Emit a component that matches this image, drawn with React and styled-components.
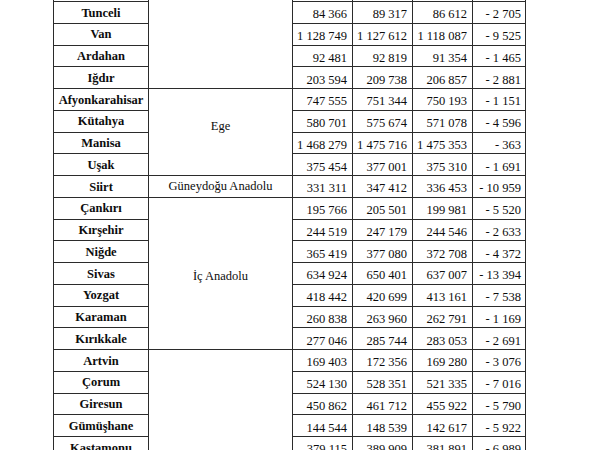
import React from 'react';
import styled, { createGlobalStyle } from 'styled-components';

const ROW_H = 21.75;
const ROWS_ABOVE = 6;

const columns = [95, 144, 60, 60, 60, 53];

const groups = [
  {
    region: 'Doğu Anadolu',
    rows: [
      ['Erzincan', '210 645', '213 538', '210 340', '- 3 198'],
      ['Erzurum', '784 941', '774 967', '769 085', '- 5 882'],
      ['Hakkari', '236 581', '246 469', '256 761', '10 292'],
      ['Kars', '312 128', '312 205', '306 536', '- 5 669'],
      ['Malatya', '722 065', '733 789', '736 884', '3 095'],
      ['Muş', '404 309', '403 236', '406 886', '3 650'],
      ['Tunceli', '84 366', '89 317', '86 612', '- 2 705'],
      ['Van', '1 128 749', '1 127 612', '1 118 087', '- 9 525'],
      ['Ardahan', '92 481', '92 819', '91 354', '- 1 465'],
      ['Iğdır', '203 594', '209 738', '206 857', '- 2 881'],
    ],
  },
  {
    region: 'Ege',
    shift: -11,
    rows: [
      ['Afyonkarahisar', '747 555', '751 344', '750 193', '- 1 151'],
      ['Kütahya', '580 701', '575 674', '571 078', '- 4 596'],
      ['Manisa', '1 468 279', '1 475 716', '1 475 353', '- 363'],
      ['Uşak', '375 454', '377 001', '375 310', '- 1 691'],
    ],
  },
  {
    region: 'Güneydoğu Anadolu',
    rows: [['Siirt', '331 311', '347 412', '336 453', '- 10 959']],
  },
  {
    region: 'İç Anadolu',
    shift: 6,
    rows: [
      ['Çankırı', '195 766', '205 501', '199 981', '- 5 520'],
      ['Kırşehir', '244 519', '247 179', '244 546', '- 2 633'],
      ['Niğde', '365 419', '377 080', '372 708', '- 4 372'],
      ['Sivas', '634 924', '650 401', '637 007', '- 13 394'],
      ['Yozgat', '418 442', '420 699', '413 161', '- 7 538'],
      ['Karaman', '260 838', '263 960', '262 791', '- 1 169'],
      ['Kırıkkale', '277 046', '285 744', '283 053', '- 2 691'],
    ],
  },
  {
    region: 'Karadeniz',
    rows: [
      ['Artvin', '169 403', '172 356', '169 280', '- 3 076'],
      ['Çorum', '524 130', '528 351', '521 335', '- 7 016'],
      ['Giresun', '450 862', '461 712', '455 922', '- 5 790'],
      ['Gümüşhane', '144 544', '148 539', '142 617', '- 5 922'],
      ['Kastamonu', '379 115', '389 909', '381 891', '- 6 989'],
      ['Ordu', '715 409', '719 183', '723 507', '4 324'],
      ['Rize', '319 410', '319 569', '323 012', '3 443'],
      ['Samsun', '1 228 959', '1 233 677', '1 250 076', '16 399'],
      ['Sinop', '225 574', '200 791', '201 134', '343'],
      ['Tokat', '828 027', '620 722', '624 439', '3 717'],
      ['Trabzon', '740 569', '748 982', '765 127', '16 145'],
      ['Zonguldak', '615 599', '619 151', '619 812', '661'],
    ],
  },
];

const GlobalStyle = createGlobalStyle`
  html, body {
    margin: 0;
    padding: 0;
    background: #ffffff;
    overflow: hidden;
  }
  body {
    font-family: "Liberation Serif", "Times New Roman", serif;
    color: #0d0d0d;
  }
`;

const Page = styled.div`
  width: 594px;
  height: 450px;
  overflow: hidden;
`;

const Sheet = styled.table`
  margin: ${-(ROWS_ABOVE * ROW_H) + 1}px 0 0 53px;
  width: 472px;
  table-layout: fixed;
  border-collapse: collapse;
  font-size: 12.5px;
`;

const Col = styled.col`
  width: ${(p) => p.$w}px;
`;

const Row = styled.tr`
  height: ${ROW_H}px;
`;

const Cell = styled.td`
  border: 1px solid #2b2b2b;
  padding: 0;
  white-space: nowrap;
  line-height: 1;
`;

const NameCell = styled(Cell)`
  font-weight: bold;
  text-align: center;
  vertical-align: middle;
  padding-top: 1px;
`;

const RegionCell = styled(Cell)`
  text-align: center;
  vertical-align: middle;
  padding-top: ${(p) => (p.$shift > 0 ? p.$shift : 0)}px;
  padding-bottom: ${(p) => (p.$shift < 0 ? -p.$shift : 0)}px;
`;

const NumCell = styled(Cell)`
  text-align: right;
  vertical-align: bottom;
  padding: 0 ${(p) => (p.$last ? 4 : 5)}px 2px 0;
`;

export default function App() {
  return (
    <Page>
      <GlobalStyle />
      <Sheet>
        <colgroup>
          {columns.map((w, i) => (
            <Col key={i} $w={w} />
          ))}
        </colgroup>
        <tbody>
          {groups.map((g) =>
            g.rows.map(([name, a, b, c, d], i) => (
              <Row key={name}>
                <NameCell>{name}</NameCell>
                {i === 0 && (
                  <RegionCell rowSpan={g.rows.length} $shift={g.shift || 0}>
                    {g.region}
                  </RegionCell>
                )}
                <NumCell>{a}</NumCell>
                <NumCell>{b}</NumCell>
                <NumCell>{c}</NumCell>
                <NumCell $last>{d}</NumCell>
              </Row>
            ))
          )}
        </tbody>
      </Sheet>
    </Page>
  );
}
